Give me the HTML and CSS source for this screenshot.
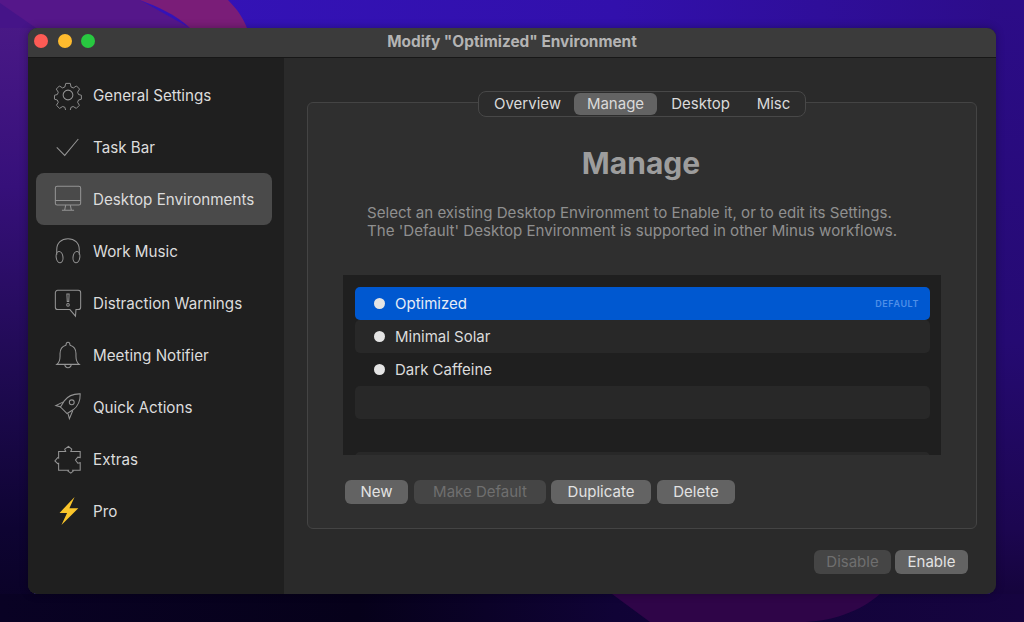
FILE: index.html
```html
<!DOCTYPE html>
<html lang="en">
<head>
<meta charset="utf-8">
<title>Modify "Optimized" Environment</title>
<link rel="stylesheet" href="styles.css">
</head>
<body>
<svg class="wallpaper" viewBox="0 0 1024 622" preserveAspectRatio="none" aria-hidden="true">
  <defs>
    <linearGradient id="sky" x1="0" y1="0" x2="1" y2="0">
      <stop offset="0" stop-color="#3c30c4"/>
      <stop offset=".12" stop-color="#3413b8"/>
      <stop offset=".6" stop-color="#3210ac"/>
      <stop offset="1" stop-color="#2c0c88"/>
    </linearGradient>
    <linearGradient id="rightSide" x1="0" y1="0" x2="0" y2="1">
      <stop offset="0" stop-color="#2c0c88"/>
      <stop offset=".55" stop-color="#250a72"/>
      <stop offset=".85" stop-color="#1c0650"/>
      <stop offset="1" stop-color="#120334"/>
    </linearGradient>
    <linearGradient id="leftSide" x1="0" y1="0" x2="0" y2="1">
      <stop offset="0" stop-color="#4c1a88"/>
      <stop offset=".3" stop-color="#36107a"/>
      <stop offset=".6" stop-color="#1f0a52"/>
      <stop offset=".85" stop-color="#0e0432"/>
      <stop offset="1" stop-color="#090224"/>
    </linearGradient>
    <linearGradient id="floor" x1="0" y1="0" x2="1" y2="0">
      <stop offset="0" stop-color="#090224"/>
      <stop offset=".35" stop-color="#06011a"/>
      <stop offset=".6" stop-color="#100336"/>
      <stop offset="1" stop-color="#160440"/>
    </linearGradient>
  </defs>
  <rect width="1024" height="622" fill="url(#sky)"/>
  <rect x="990" width="34" height="622" fill="url(#rightSide)"/>
  <rect width="34" height="622" fill="url(#leftSide)"/>
  <path d="M0 0H140L190 28H0Z" fill="#55178a"/>
  <path d="M0 3L36 28H0Z" fill="#451488"/>
  <path d="M140 0H228C238 10 243 18 247 28H190C175 14 158 7 140 0Z" fill="#7a1d78"/>
  <rect y="594" width="1024" height="28" fill="url(#floor)"/>
  <path d="M612 594H880C860 612 830 622 800 622H650Z" fill="#2f0548"/>
</svg>

<div class="window">
  <header class="titlebar">
    <div class="lights">
      <span class="light light-red"></span>
      <span class="light light-yellow"></span>
      <span class="light light-green"></span>
    </div>
    <h1 class="title">Modify "Optimized" Environment</h1>
  </header>

  <div class="body">
    <nav class="sidebar">
      <a class="item">
        <svg class="icon" viewBox="0 0 32 32"><path d="M13.4 2.5h5.2l.9 4.2 2.6 1.1 3.7-2.3 3.6 3.6-2.3 3.7 1.1 2.6 3.3.9v4.5l-3.3 1-1.1 2.6 2.1 3.5-3.6 3.6-3.6-2.2-2.6 1-.9 3.7h-5.2l-.9-3.7-2.6-1-3.6 2.2-3.6-3.6 2.1-3.5-1.1-2.6-3.3-1v-4.5l3.3-.9 1.1-2.6-2.3-3.7 3.6-3.6 3.7 2.3 2.6-1.1z" transform="translate(1.3 1.3) scale(.92)"/><circle cx="16" cy="16" r="5.2"/></svg>
        <span>General Settings</span>
      </a>
      <a class="item">
        <svg class="icon" viewBox="0 0 32 32"><path d="M4 16.5l8.5 8.5L27 7.5"/></svg>
        <span>Task Bar</span>
      </a>
      <a class="item item-active">
        <svg class="icon" viewBox="0 0 32 32"><rect x="2.5" y="2.5" width="27" height="20" rx="2"/><path d="M2.5 17.5h27M13.5 22.5l-1 5M18.5 22.5l1 5M9.5 28h13"/></svg>
        <span>Desktop Environments</span>
      </a>
      <a class="item">
        <svg class="icon" viewBox="0 0 32 32"><path d="M4 20V14.5C4 7.5 9 3 16 3s12 4.5 12 11.5V20"/><ellipse cx="7" cy="22.5" rx="3.6" ry="6" transform="rotate(-8 7 22.5)"/><ellipse cx="25" cy="22.5" rx="3.6" ry="6" transform="rotate(8 25 22.5)"/></svg>
        <span>Work Music</span>
      </a>
      <a class="item">
        <svg class="icon" viewBox="0 0 32 32"><path d="M5 2.5h22a2.5 2.5 0 0 1 2.500 2.500v15.500a2.500 2.500 0 0 1-2.500 2.500h-2.500l-.5 7-6-7H5a2.500 2.500 0 0 1-2.500-2.500V5A2.500 2.500 0 0 1 5 2.500z"/><path d="M14.8 6.500h2.400l-.4 8h-1.600z"/><circle cx="16" cy="18" r="1.400"/></svg>
        <span>Distraction Warnings</span>
      </a>
      <a class="item">
        <svg class="icon" viewBox="0 0 32 32"><path d="M4 26c2.500-2 3.500-4.500 3.500-8.500v-3C7.500 9.500 10 6.500 13.800 5.500 14 3.500 15 2.500 16 2.500s2 1 2.200 3c3.800 1 6.300 4 6.300 9v3c0 4 1 6.500 3.500 8.500z"/><path d="M12.500 26c.3 2.500 1.800 3.500 3.500 3.500s3.200-1 3.500-3.500"/></svg>
        <span>Meeting Notifier</span>
      </a>
      <a class="item">
        <svg class="icon" viewBox="0 0 32 32"><path d="M29 2c-7-.2-13 2-17 7.500L8 16l7 7 6.500-4C27 15 29.200 9 29 2z"/><circle cx="20" cy="11" r="2.600"/><path d="M11 10.500L3 14.500l5.500 1.500M21 20l-3.500 8.500-1.500-5.500"/></svg>
        <span>Quick Actions</span>
      </a>
      <a class="item">
        <svg class="icon" viewBox="0 0 32 32"><path d="M12.500 5.500L16.500 2.500l3.500 3-1 2.500h10v6.500l-2.500-.5-2.500 3 2.500 3.500 2.500-.5V28h-8l.5 1-2.500 2-3-2 .5-1H6v-7.500l-1 .5-3-3 3-3.500 1 .5V8h7.500z"/></svg>
        <span>Extras</span>
      </a>
      <a class="item">
        <svg class="icon icon-bolt" viewBox="0 0 32 32"><path d="M23 1L7 18h8L9 31l18-18h-9.500z"/></svg>
        <span>Pro</span>
      </a>
    </nav>

    <main class="main">
      <div class="tabs">
        <span class="tab tab-overview">Overview</span>
        <span class="tab tab-manage tab-active">Manage</span>
        <span class="tab tab-desktop">Desktop</span>
        <span class="tab tab-misc">Misc</span>
      </div>
      <section class="panel">
        <h2 class="heading">Manage</h2>
        <p class="desc">Select an existing Desktop Environment to Enable it, or to edit its Settings.<br>The 'Default' Desktop Environment is supported in other Minus workflows.</p>
        <div class="list">
          <div class="row row-selected"><span class="dot"></span><span class="row-name">Optimized</span><span class="badge">DEFAULT</span></div>
          <div class="row row-alt"><span class="dot"></span><span class="row-name">Minimal Solar</span></div>
          <div class="row"><span class="dot"></span><span class="row-name">Dark Caffeine</span></div>
          <div class="row row-alt"></div>
          <div class="row"></div>
          <div class="row row-alt"></div>
        </div>
        <div class="actions">
          <button class="btn btn-new">New</button>
          <button class="btn btn-make btn-disabled">Make Default</button>
          <button class="btn btn-dup">Duplicate</button>
          <button class="btn btn-del">Delete</button>
        </div>
      </section>
      <div class="footer">
        <button class="btn btn-disable btn-disabled">Disable</button>
        <button class="btn btn-enable">Enable</button>
      </div>
    </main>
  </div>
</div>
</body>
</html>
```
FILE: styles.css
```css
* { box-sizing: border-box; }
html, body { margin: 0; height: 100%; }
body {
  width: 1024px;
  height: 622px;
  overflow: hidden;
  padding: 28px 28px 0;
  font-family: Inter, "Liberation Sans", sans-serif;
  background: #1a0650;
  position: relative;
}
.wallpaper { position: absolute; inset: 0; width: 1024px; height: 622px; display: block; }

.window {
  position: relative;
  width: 968px;
  height: 566px;
  border-radius: 9px;
  overflow: hidden;
  background: #2a2a2a;
  display: flex;
  flex-direction: column;
  box-shadow: 0 0 8px rgba(0, 0, 0, .3);
}

.titlebar {
  height: 30px;
  flex: none;
  background: #3b3b3b;
  border-bottom: 1px solid #171717;
  position: relative;
  display: flex;
  align-items: center;
  justify-content: center;
}
.lights { position: absolute; left: 6px; top: 6px; display: flex; gap: 9.5px; }
.light { width: 14px; height: 14px; border-radius: 50%; }
.light-red { background: #fd5b55; }
.light-yellow { background: #febb2e; }
.light-green { background: #28c840; }
.title {
  margin: 0 0 3px;
  font-size: 15.4px;
  font-weight: 700;
  color: #b4b4b4;
  white-space: nowrap;
}

.body { flex: 1; display: flex; min-height: 0; }

.sidebar {
  width: 256px;
  flex: none;
  background: #1f1f1f;
  padding: 11px 12px 0 8px;
  display: flex;
  flex-direction: column;
}
.item {
  height: 52px;
  flex: none;
  display: flex;
  align-items: center;
  gap: 10px;
  padding-left: 17px;
  border-radius: 8px;
  color: #dcdcdc;
  font-size: 15.2px;
  white-space: nowrap;
}
.item-active { background: #4a4a4a; }
.icon {
  width: 30px;
  height: 30px;
  flex: none;
  fill: none;
  stroke: #949494;
  stroke-width: 1.1;
}
.icon-bolt { fill: #f9c52b; stroke: none; }

.main {
  flex: 1;
  min-width: 0;
  position: relative;
  padding: 44px 19px 0 23px;
  display: flex;
  flex-direction: column;
}

.tabs {
  position: absolute;
  top: 33px;
  left: 194px;
  width: 328px;
  height: 26px;
  display: flex;
  align-items: center;
  padding: 2px;
  background: #2c2c2c;
  border: 1px solid #484848;
  border-radius: 8px;
  color: #dadada;
  font-size: 15px;
  z-index: 1;
}
.tab { height: 22px; padding-bottom: 2px; display: flex; align-items: center; justify-content: center; white-space: nowrap; }
.tab-overview { width: 93px; }
.tab-manage { width: 83px; }
.tab-desktop { width: 87px; }
.tab-misc { width: 59px; }
.tab-active { background: #636363; border-radius: 6px; }

.panel {
  width: 670px;
  height: 427px;
  flex: none;
  background: #2f2f2f;
  border: 1px solid #444;
  border-radius: 6px;
  padding: 0 35px;
  display: flex;
  flex-direction: column;
}
.heading {
  margin: 42px 0 0;
  padding-right: 2px;
  height: 37px;
  line-height: 37px;
  text-align: center;
  font-size: 30px;
  font-weight: 700;
  color: #9d9d9d;
}
.desc {
  margin: 22px 0 0;
  padding-left: 24px;
  font-size: 15.1px;
  line-height: 18px;
  color: #8f8f8f;
  white-space: nowrap;
}
.list {
  margin: 35px 0 0;
  width: 598px;
  height: 180px;
  flex: none;
  background: #1f1f1f;
  padding: 12px 11px 0 12px;
  overflow: hidden;
}
.row {
  height: 33px;
  display: flex;
  align-items: center;
  padding: 0 11px 0 19px;
  border-radius: 5px;
  color: #dcdcdc;
  font-size: 15px;
}
.row-alt { background: #282828; }
.row-selected { background: #0058d0; color: #e6ecf6; }
.dot { width: 11px; height: 11px; border-radius: 50%; background: #e4e4e4; margin-right: 10px; flex: none; }
.row-name { flex: 1; padding-bottom: 1px; }
.badge { font-size: 9px; font-weight: 600; letter-spacing: .6px; color: #4f8fe8; }

.actions { margin: 25px 0 0 2px; display: flex; }
.btn {
  height: 24px;
  padding: 0 0 2px;
  border: 0;
  border-radius: 6px;
  background: #636363;
  color: #e2e2e2;
  font-family: inherit;
  font-size: 15px;
  display: block;
  white-space: nowrap;
}
.btn-disabled { background: #454545; color: #6f6f6f; }
.btn-new { width: 63px; }
.btn-make { width: 132px; margin-left: 6px; }
.btn-dup { width: 100px; margin-left: 5px; }
.btn-del { width: 78px; margin-left: 6px; }

.footer { margin-top: 21px; display: flex; justify-content: flex-end; gap: 4px; padding-right: 9px; }
.btn-disable { width: 77px; }
.btn-enable { width: 73px; }
```
